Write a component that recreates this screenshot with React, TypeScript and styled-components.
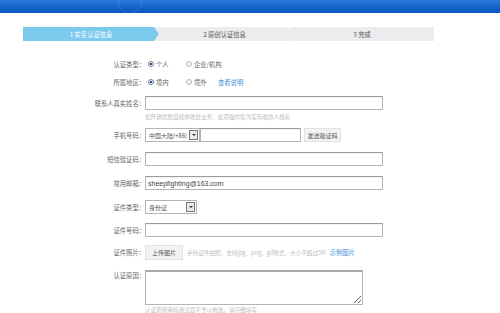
import React from "react";
import styled, { createGlobalStyle } from "styled-components";

const Global = createGlobalStyle`
  html, body { margin: 0; padding: 0; background: #fff; }
  body {
    font-family: "Noto Sans CJK SC", "Liberation Sans", sans-serif;
    font-size: 6.3px;
    color: #555;
    width: 500px;
    height: 313px;
    overflow: hidden;
  }
`;

const TopBar = styled.div`
  height: 13px;
  background: linear-gradient(180deg, #2c7ad9 0%, #1261c8 60%, #0b57bd 100%);
  overflow: hidden;
  display: flex;
`;

const Ring = styled.div`
  width: 24px;
  height: 24px;
  margin: -10px 0 0 118px;
  border-radius: 50%;
  border: 1.5px solid rgba(255, 255, 255, 0.12);
  box-sizing: border-box;
`;

const Steps = styled.div`
  display: flex;
  margin: 14px 0 0 23px;
  width: 411px;
  height: 14px;
`;

const Step = styled.div<{ $active?: boolean; $w: number; $last?: boolean }>`
  position: relative;
  width: ${(p) => p.$w}px;
  height: 14px;
  display: flex;
  align-items: center;
  justify-content: center;
  background: ${(p) => (p.$active ? "#7cc9ee" : "#ececee")};
  color: ${(p) => (p.$active ? "#fff" : "#555")};
  clip-path: ${(p) =>
    p.$last ? "none" : "polygon(0 0, calc(100% - 5px) 0, 100% 50%, calc(100% - 5px) 100%, 0 100%)"};
  margin-right: ${(p) => (p.$last ? 0 : -4)}px;
  z-index: ${(p) => (p.$active ? 2 : 1)};
`;

const Chevron = styled.div`
  position: absolute;
  right: 0;
  top: 0;
  width: 6px;
  height: 14px;
  background: #fff;
  clip-path: polygon(0 0, 1px 0, 6px 50%, 1px 100%, 0 100%, 5px 50%);
`;

const Form = styled.div`
  display: flex;
  flex-direction: column;
`;

const Row = styled.div<{ $mt: number; $h?: number; $top?: boolean }>`
  display: grid;
  grid-template-columns: 145px 1fr;
  align-items: ${(p) => (p.$top ? "start" : "center")};
  margin-top: ${(p) => p.$mt}px;
  min-height: ${(p) => p.$h ?? 14}px;
`;

const Label = styled.div<{ $pt?: number }>`
  text-align: right;
  color: #666;
  padding-top: ${(p) => p.$pt ?? 0}px;
  white-space: nowrap;
`;

const Field = styled.div`
  display: flex;
  align-items: center;
`;

const Input = styled.div<{ $w: number }>`
  box-sizing: border-box;
  width: ${(p) => p.$w}px;
  height: 14px;
  border: 1px solid #b4b4b4;
  border-top-color: #9c9c9c;
  box-shadow: inset 0 1px 1px rgba(0, 0, 0, 0.06);
  background: #fff;
  display: flex;
  align-items: center;
  padding-left: 2px;
  font-family: "Liberation Sans", "Noto Sans CJK SC", sans-serif;
  font-size: 7px;
  color: #444;
`;

const Select = styled.div<{ $w: number }>`
  box-sizing: border-box;
  width: ${(p) => p.$w}px;
  height: 14px;
  border: 1px solid #b4b4b4;
  background: #fff;
  display: flex;
  align-items: center;
  justify-content: space-between;
  padding: 0 1px 0 3px;
  color: #555;
  font-size: 6px;
`;

const Drop = styled.div`
  box-sizing: border-box;
  width: 9px;
  height: 10px;
  border: 1px solid #777;
  background: #e9e9e9;
  display: flex;
  align-items: center;
  justify-content: center;
  &::after {
    content: "";
    border-left: 2px solid transparent;
    border-right: 2px solid transparent;
    border-top: 2.5px solid #333;
  }
`;

const Btn = styled.div<{ $w: number; $h?: number }>`
  box-sizing: border-box;
  width: ${(p) => p.$w}px;
  height: ${(p) => p.$h ?? 14}px;
  border: 1px solid #e2e2e2;
  background: #f3f3f3;
  display: flex;
  align-items: center;
  justify-content: center;
  color: #555;
  font-size: 6px;
`;

const Radio = styled.span<{ $on?: boolean }>`
  box-sizing: border-box;
  display: inline-block;
  width: 6px;
  height: 6px;
  border-radius: 50%;
  border: 1px solid ${(p) => (p.$on ? "#6a7f99" : "#b8b8b8")};
  background: ${(p) =>
    p.$on ? "radial-gradient(circle, #2f4f7a 0 1.3px, #fff 1.6px)" : "#f6f6f6"};
  margin: 0 2px 0 3px;
`;

const Option = styled.span<{ $w: number }>`
  display: inline-flex;
  align-items: center;
  width: ${(p) => p.$w}px;
  color: #666;
`;

const LinkText = styled.span`
  color: #3d8fd3;
`;

const Hint = styled.div<{ $mt?: number }>`
  color: #bdbdbd;
  font-size: 5.6px;
  margin-top: ${(p) => p.$mt ?? 0}px;
  white-space: nowrap;
`;

const Area = styled.textarea`
  box-sizing: border-box;
  width: 218px;
  height: 35px;
  border: 1px solid #b4b4b4;
  border-top: 2px solid #a9a9a9;
  margin: 0;
  padding: 0;
  display: block;
  resize: both;
`;

const Col = styled.div`
  display: flex;
  flex-direction: column;
`;

export default function App() {
  return (
    <>
      <Global />
      <TopBar>
        <Ring />
      </TopBar>
      <Steps>
        <Step $active $w={136}>
          1 实名认证信息
        </Step>
        <Step $w={139}>
          2 原创认证信息
          <Chevron />
        </Step>
        <Step $w={144} $last>
          3 完成
        </Step>
      </Steps>
      <Form>
        <Row $mt={16}>
          <Label>认证类型：</Label>
          <Field>
            <Option $w={38}>
              <Radio $on />
              个人
            </Option>
            <Option $w={50}>
              <Radio />
              企业/机构
            </Option>
          </Field>
        </Row>
        <Row $mt={4}>
          <Label>所属地区：</Label>
          <Field>
            <Option $w={38}>
              <Radio $on />
              境内
            </Option>
            <Option $w={35}>
              <Radio />
              境外
            </Option>
            <LinkText>查看说明</LinkText>
          </Field>
        </Row>
        <Row $mt={7} $top>
          <Label $pt={3}>联系人真实姓名：</Label>
          <Col>
            <Input $w={238} />
            <Hint $mt={3}>如开通优酷自媒体收益业务，此项操作仅为实际收款人姓名</Hint>
          </Col>
        </Row>
        <Row $mt={7}>
          <Label>手机号码：</Label>
          <Field>
            <Select $w={55}>
              中国大陆(+86)
              <Drop />
            </Select>
            <Input $w={101} />
            <Btn $w={37} style={{ marginLeft: 3 }}>
              发送验证码
            </Btn>
          </Field>
        </Row>
        <Row $mt={10}>
          <Label>短信验证码：</Label>
          <Input $w={238} />
        </Row>
        <Row $mt={10}>
          <Label>常用邮箱：</Label>
          <Input $w={238}>sheepfighting@163.com</Input>
        </Row>
        <Row $mt={10}>
          <Label>证件类型：</Label>
          <Field>
            <Select $w={52}>
              身份证
              <Drop />
            </Select>
          </Field>
        </Row>
        <Row $mt={9}>
          <Label>证件号码：</Label>
          <Input $w={238} />
        </Row>
        <Row $mt={8} $h={15}>
          <Label>证件照片：</Label>
          <Field>
            <Btn $w={38} $h={15}>
              上传图片
            </Btn>
            <Hint style={{ marginLeft: 4 }}>
              手持证件拍照，支持jpg、png、gif格式，大小不超过5M
            </Hint>
            <LinkText style={{ marginLeft: 4 }}>示例图片</LinkText>
          </Field>
        </Row>
        <Row $mt={10} $top>
          <Label $pt={1}>认证原因：</Label>
          <Col>
            <Area />
            <Hint $mt={1}>认证原因审核通过后不予以修改，请仔细填写</Hint>
          </Col>
        </Row>
      </Form>
    </>
  );
}
